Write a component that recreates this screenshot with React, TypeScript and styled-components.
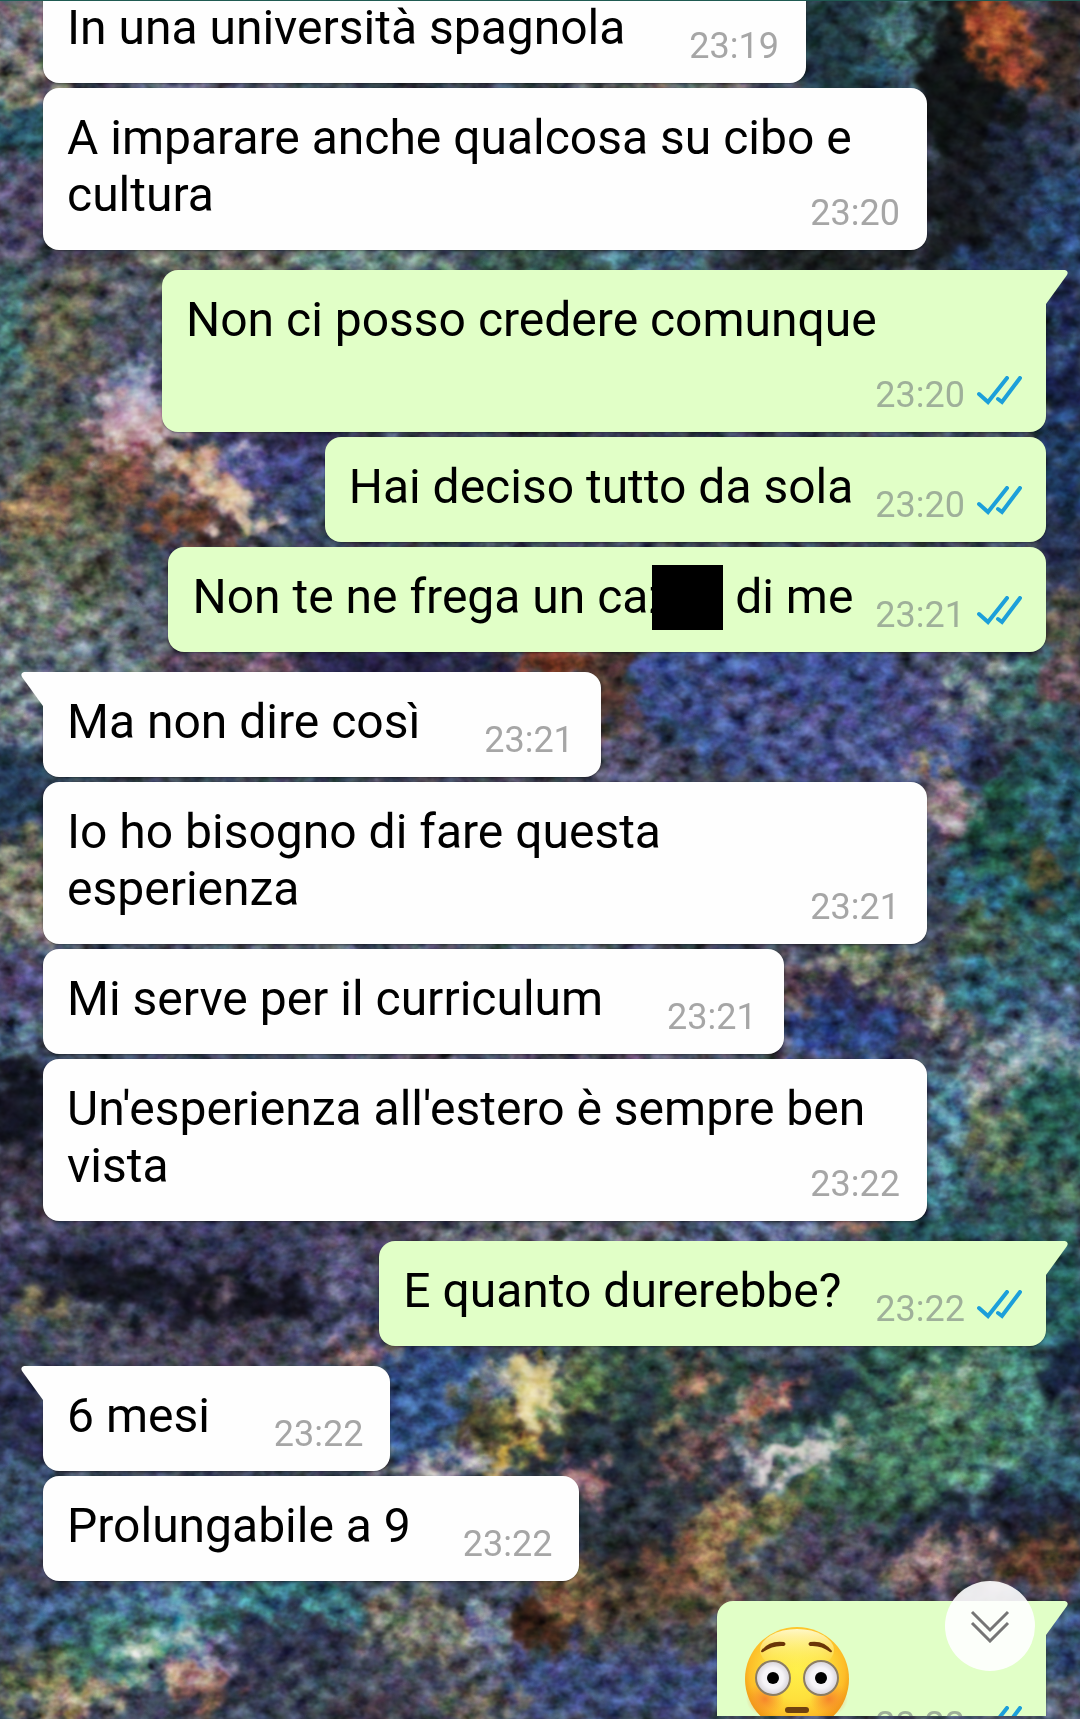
import React from 'react';
import styled, { createGlobalStyle, css } from 'styled-components';

const GlobalStyle = createGlobalStyle`
  *, *::before, *::after { box-sizing: border-box; }
  html, body, #root { height: 100%; margin: 0; }
  body { font-family: Roboto, "Noto Sans", sans-serif; background: #3b4358; }
`;

const Screen = styled.div`
  position: relative;
  display: flex;
  flex-direction: column;
  height: 100vh;
  padding-bottom: 3px;
  border-top: 1px solid #1f5a52;
  overflow: hidden;
`;

const WallpaperSvg = styled.svg`
  position: absolute;
  inset: 0;
  width: 100%;
  height: 100%;
`;

const Grain = styled.rect`
  opacity: 0.8;
  mix-blend-mode: overlay;
`;

const Conversation = styled.main`
  position: relative;
  flex: 1;
  min-height: 0;
  overflow: hidden;
`;

/* The thread is scrolled part of the way through its first message. */
const Thread = styled.ol`
  display: flex;
  flex-direction: column;
  gap: 5px;
  margin: -23px 0 0;
  padding: 0 34px 0 43px;
  list-style: none;
`;

const Bubble = styled.li<{ $mine: boolean; $first: boolean }>`
  position: relative;
  display: flow-root;
  padding: 21px 24px 16px;
  border-radius: 16px;
  color: #000;
  font-size: 48px;
  line-height: 57px;
  box-shadow: 0 1px 2px rgba(0, 0, 0, 0.35);
  ${({ $mine }) =>
    $mine
      ? css`
          align-self: flex-end;
          margin-left: 119px;
          background: #e1ffc7;
        `
      : css`
          align-self: flex-start;
          margin-right: 119px;
          padding-right: 27px;
          background: #fefefe;
        `}
  ${({ $first, $mine }) =>
    $first &&
    css`
      margin-top: 15px;
      border-top-${$mine ? 'right' : 'left'}-radius: 0;
    `}
`;

const TailSvg = styled.svg<{ $mine: boolean }>`
  position: absolute;
  top: 0;
  width: 23px;
  height: 35px;
  ${({ $mine }) => ($mine ? 'right: -22px;' : 'left: -22px; transform: scaleX(-1);')}
`;

const Meta = styled.span<{ $mine: boolean; $tall: boolean }>`
  float: right;
  display: flex;
  align-items: flex-start;
  gap: 12px;
  margin-top: ${({ $tall }) => ($tall ? 82 : 26)}px;
  margin-left: ${({ $mine }) => ($mine ? 22 : 52)}px;
  color: ${({ $mine }) => ($mine ? '#9fb09a' : '#a6a6a6')};
  font-size: 36px;
  line-height: 42px;
`;

const TicksSvg = styled.svg`
  width: 45px;
  height: 30px;
  margin-top: 2px;
`;

const Redaction = styled.span`
  position: relative;
  display: inline-block;
  width: 71px;
  height: 65px;
  margin: -3px 0 -5px -20px;
  vertical-align: top;
  background: #000;
`;

const EmojiSvg = styled.svg`
  float: left;
  width: 112px;
  height: 112px;
`;

const ScrollButton = styled.button`
  position: absolute;
  right: 45px;
  bottom: 48px;
  display: grid;
  place-items: center;
  width: 90px;
  height: 90px;
  padding: 0;
  border: 0;
  border-radius: 50%;
  background: rgba(255, 255, 255, 0.9);
`;

const ChevronSvg = styled.svg`
  width: 40px;
  height: 34px;
`;

type Stroke = [number, number, number, number, number, string];

/* Brush strokes of the painted wallpaper: x, y, rx, ry, angle, colour. */
const strokes: Stroke[] = [
  [10, 20, 60, 60, 0, '#77757d'], [20, 75, 50, 30, 0, '#7b7a70'], [10, 120, 45, 28, 0, '#2c5867'],
  [20, 190, 50, 50, 20, '#55506a'], [60, 245, 60, 30, 0, '#4a4a5c'],
  [180, 78, 90, 14, 0, '#575a72'], [400, 78, 150, 14, 0, '#3c4a58'], [600, 78, 100, 12, 0, '#6a6b62'],
  [770, 40, 55, 60, 0, '#213943'], [825, 25, 28, 55, 10, '#477072'], [805, 80, 16, 30, 0, '#275063'],
  [885, 80, 50, 110, 0, '#111517'], [912, 28, 26, 50, -25, '#a9512d'], [935, 55, 16, 26, -20, '#8a452e'],
  [970, 40, 24, 70, 0, '#352c2b'], [875, 200, 35, 70, 0, '#171a20'], [930, 170, 30, 70, 0, '#202a3d'],
  [970, 200, 30, 60, 0, '#29466f'], [960, 130, 20, 30, 0, '#2c3650'],
  [220, 238, 120, 22, 0, '#6c6f66'], [350, 238, 80, 20, 0, '#6b8884'], [500, 238, 90, 16, 0, '#38574f'],
  [600, 238, 50, 14, 0, '#47728b'], [750, 238, 100, 16, 0, '#1b2020'], [910, 245, 50, 20, 0, '#263d63'],
  [15, 310, 35, 70, 0, '#456f72'], [70, 300, 50, 55, 20, '#666455'], [120, 300, 35, 60, 10, '#515869'],
  [30, 400, 45, 55, 0, '#55605f'], [80, 440, 50, 50, 0, '#5c5846'], [30, 470, 35, 35, 0, '#886f53'],
  [120, 385, 38, 34, 30, '#c7abb3'], [125, 350, 22, 20, 30, '#a3a3c0'], [115, 430, 28, 26, 20, '#87584a'],
  [255, 415, 65, 42, 20, '#43437b'], [235, 400, 18, 34, 40, '#8c8abb'], [275, 455, 30, 30, 0, '#3f517a'],
  [185, 435, 44, 17, 40, '#d3aa8d'], [220, 465, 40, 13, 40, '#ecd2b8'], [165, 475, 36, 20, 25, '#7c4930'],
  [200, 488, 34, 10, 15, '#4b3029'], [60, 530, 70, 50, 0, '#687162'], [30, 570, 60, 40, 0, '#777f7b'],
  [90, 522, 11, 11, 0, '#16120b'], [130, 560, 35, 40, 0, '#5c6470'], [250, 395, 80, 10, 0, '#2b2946'],
  [550, 396, 200, 10, 0, '#33384e'],
  [970, 330, 28, 80, 0, '#1c2750'], [972, 430, 22, 60, 0, '#1e3a62'], [970, 500, 24, 40, 0, '#26304f'],
  [972, 575, 24, 38, 0, '#59534a'], [972, 310, 12, 20, 0, '#3c5a82'],
  [60, 605, 90, 26, 0, '#66737c'], [220, 605, 90, 18, 0, '#6b5567'], [370, 605, 110, 18, 0, '#242144'],
  [510, 604, 50, 16, 0, '#7c3c28'], [580, 640, 55, 55, 0, '#4f3931'], [575, 690, 50, 30, 0, '#55526f'],
  [720, 640, 150, 70, 10, '#3e508c'], [780, 680, 100, 34, 10, '#4a568d'], [700, 640, 70, 10, 12, '#504a72'],
  [620, 670, 18, 14, 0, '#263e56'], [845, 640, 40, 40, 0, '#4b4d80'], [890, 630, 38, 30, 0, '#74808d'],
  [940, 630, 32, 38, 0, '#3d6868'], [975, 620, 20, 30, 0, '#665259'], [880, 690, 30, 24, 0, '#405a9a'],
  [12, 720, 36, 60, 0, '#253c57'], [15, 650, 30, 35, 0, '#737f87'], [15, 790, 34, 34, 0, '#6e7061'],
  [20, 835, 28, 34, 0, '#8e8b7b'], [15, 895, 34, 34, 0, '#4d4872'], [15, 950, 34, 30, 0, '#526b85'],
  [15, 1010, 34, 45, 0, '#151724'], [15, 1080, 40, 34, 0, '#393446'],
  [250, 711, 220, 8, 0, '#374954'], [450, 711, 120, 8, 0, '#4b4650'], [300, 864, 300, 9, 0, '#586576'],
  [965, 780, 60, 110, 0, '#22545d'], [915, 760, 40, 60, 0, '#215047'], [900, 690, 26, 10, -45, '#221a32'],
  [865, 738, 27, 22, 30, '#9c8890'], [848, 700, 17, 10, 0, '#a98764'], [960, 740, 28, 28, 0, '#34637c'],
  [890, 810, 34, 20, 0, '#2f6d87'], [955, 795, 26, 20, 20, '#504b31'], [900, 850, 34, 22, 0, '#4b624e'],
  [965, 860, 34, 26, 0, '#376a71'], [780, 890, 70, 28, 0, '#6d7368'], [730, 895, 26, 26, 0, '#67555d'],
  [800, 918, 65, 28, 20, '#2b2549'], [765, 942, 56, 24, 0, '#304987'], [850, 925, 34, 16, 25, '#8a8580'],
  [780, 880, 32, 14, 20, '#8a9a78'], [900, 900, 40, 28, 0, '#346a7c'], [960, 930, 30, 30, 0, '#526f92'],
  [945, 965, 56, 24, 0, '#85a2aa'], [895, 985, 24, 24, 0, '#7d7f85'], [960, 1050, 60, 80, 0, '#285953'],
  [905, 1040, 24, 34, 0, '#65765d'], [865, 1020, 14, 58, 10, '#5995aa'], [858, 1090, 20, 34, 25, '#467f8c'],
  [965, 1090, 30, 28, 0, '#47675e'], [540, 962, 230, 7, 0, '#70637b'],
  [100, 1122, 150, 18, 0, '#565574'], [320, 1126, 130, 18, 0, '#49445a'], [510, 1125, 120, 18, 0, '#6c6c76'],
  [710, 1123, 100, 14, 0, '#606b94'], [790, 1120, 32, 12, 0, '#a5675c'], [870, 1125, 80, 20, 0, '#254f56'],
  [170, 1180, 230, 70, 0, '#3b3c5b'], [100, 1170, 60, 28, 10, '#171926'], [220, 1190, 72, 30, 10, '#14141f'],
  [65, 1210, 60, 14, 0, '#525d67'], [40, 1190, 30, 14, 0, '#66604c'], [310, 1155, 30, 30, 0, '#5c597c'],
  [203, 1178, 8, 8, 0, '#8a7585'], [200, 1230, 150, 24, 0, '#4a465b'], [310, 1220, 40, 20, 0, '#4d5172'],
  [15, 1300, 40, 55, 0, '#2c3152'], [15, 1380, 40, 60, 0, '#3f5672'], [20, 1450, 40, 34, 0, '#3e3d4f'],
  [970, 1190, 30, 60, 0, '#2a6063'], [350, 1241, 60, 16, 0, '#7b6261'],
  [400, 1285, 60, 70, 0, '#345387'], [450, 1300, 34, 54, 0, '#6a7a8e'], [405, 1340, 60, 16, 0, '#9a969f'],
  [600, 1275, 110, 60, 0, '#2f4b49'], [480, 1305, 65, 22, 0, '#443c24'], [485, 1268, 28, 34, 0, '#d7c994'],
  [490, 1282, 15, 17, 0, '#efe5b1'], [470, 1328, 23, 20, 0, '#d6b95a'], [535, 1260, 24, 35, 0, '#5c754e'],
  [440, 1285, 24, 15, 0, '#54583f'], [560, 1350, 100, 65, -20, '#26323d'],
  [530, 1350, 26, 14, 30, '#a47581'], [630, 1255, 28, 16, 0, '#886754'], [610, 1300, 26, 10, -25, '#81704e'],
  [640, 1325, 46, 14, -30, '#755856'], [820, 1290, 130, 70, -20, '#345f55'], [740, 1270, 50, 25, -20, '#222f42'],
  [703, 1275, 34, 11, -25, '#ca8872'], [665, 1300, 12, 12, 0, '#a7a092'],
  [870, 1265, 55, 22, -20, '#719375'], [930, 1290, 40, 65, 0, '#498177'], [970, 1250, 18, 42, 30, '#17243e'],
  [850, 1335, 80, 45, -10, '#487760'], [910, 1350, 50, 18, -35, '#629693'], [960, 1350, 45, 38, 0, '#31596a'],
  [725, 1328, 45, 11, -20, '#f1e5e5'], [703, 1335, 25, 11, 0, '#f5e9e9'], [765, 1317, 24, 9, -20, '#c6c2bb'],
  [870, 1400, 110, 34, -15, '#20283f'], [600, 1410, 70, 50, -20, '#313a45'], [650, 1410, 26, 54, 25, '#967853'],
  [710, 1380, 42, 14, -40, '#7a7a4a'], [760, 1415, 50, 28, 0, '#4e4b5e'], [790, 1370, 55, 20, 0, '#355848'],
  [955, 1405, 50, 20, -15, '#23242d'], [950, 1425, 50, 19, -15, '#61422f'], [855, 1425, 56, 24, -25, '#8a7271'],
  [560, 1445, 60, 38, -20, '#252328'], [610, 1440, 24, 34, 20, '#76503c'], [700, 1450, 52, 19, 0, '#4e514b'],
  [640, 1460, 38, 14, -15, '#9a7c61'], [520, 1450, 38, 28, 0, '#7c6545'], [590, 1470, 68, 28, 0, '#554635'],
  [480, 1475, 24, 17, -20, '#26160f'], [515, 1470, 19, 25, 20, '#9a7252'], [485, 1492, 40, 14, -20, '#412719'],
  [600, 1495, 82, 18, 0, '#4c4d50'], [560, 1540, 140, 34, 0, '#3d4c79'], [900, 1455, 80, 13, 0, '#474155'],
  [970, 1500, 28, 44, 0, '#354f76'], [970, 1550, 26, 20, 0, '#5b6070'],
  [50, 1470, 70, 28, 0, '#3d577b'], [180, 1465, 90, 22, 0, '#5380a3'], [270, 1465, 60, 26, 0, '#397784'],
  [100, 1500, 60, 28, -20, '#3e706d'], [125, 1506, 36, 9, -30, '#b7ccae'], [170, 1490, 22, 15, 0, '#82c0c2'],
  [195, 1475, 16, 14, 0, '#284338'], [195, 1515, 19, 13, 0, '#8986b0'], [165, 1527, 16, 20, 25, '#cea99d'],
  [190, 1540, 38, 15, -20, '#78534d'], [110, 1530, 32, 14, 0, '#4e838b'], [40, 1535, 50, 19, 0, '#6d7755'],
  [70, 1550, 50, 12, -10, '#b09d7c'], [270, 1520, 62, 50, 0, '#343951'], [310, 1540, 55, 19, 0, '#465360'],
  [385, 1485, 60, 30, 15, '#78796c'], [390, 1535, 74, 24, 0, '#4a4d5f'], [450, 1490, 19, 38, 0, '#77819c'],
  [440, 1555, 46, 12, 0, '#6c675c'], [330, 1562, 38, 12, 0, '#3e313d'],
];

function Wallpaper() {
  return (
    <WallpaperSvg viewBox="0 0 985 1568" preserveAspectRatio="none" aria-hidden="true">
      <defs>
        <filter id="paint" x="-40" y="-40" width="1065" height="1648" filterUnits="userSpaceOnUse" colorInterpolationFilters="sRGB">
          <feGaussianBlur in="SourceGraphic" stdDeviation="7" result="soft" />
          <feTurbulence type="fractalNoise" baseFrequency="0.05" numOctaves="4" seed="7" result="warp" />
          <feDisplacementMap in="soft" in2="warp" scale="60" xChannelSelector="R" yChannelSelector="G" />
          <feGaussianBlur stdDeviation="1.5" />
        </filter>
        <filter id="grain" x="0" y="0" width="100%" height="100%" filterUnits="userSpaceOnUse" colorInterpolationFilters="sRGB">
          <feTurbulence type="fractalNoise" baseFrequency="0.06 0.07" numOctaves="3" seed="12" />
          <feColorMatrix
            values="0.9 0.5 0.3 0 -0.38
                    0.6 0.8 0.3 0 -0.38
                    0.6 0.5 0.6 0 -0.38
                    0 0 0 0 1"
          />
          <feGaussianBlur stdDeviation="0.7" />
        </filter>
      </defs>
      <g filter="url(#paint)">
        <rect x="-50" y="-50" width="1085" height="1668" fill="#3f485c" />
        {strokes.map(([x, y, rx, ry, angle, fill], i) => (
          <ellipse key={i} cx={x} cy={y} rx={rx} ry={ry} fill={fill} transform={`rotate(${angle} ${x} ${y})`} />
        ))}
      </g>
      <Grain width="985" height="1568" filter="url(#grain)" />
    </WallpaperSvg>
  );
}

function Tail({ mine }: { mine: boolean }) {
  return (
    <TailSvg $mine={mine} viewBox="0 0 23 35" aria-hidden="true">
      <path d="M0 0H20Q24 1 22 5L1 34H0Z" fill={mine ? '#e1ffc7' : '#fefefe'} />
    </TailSvg>
  );
}

function Ticks() {
  return (
    <TicksSvg viewBox="0 0 45 30" role="img" aria-label="Letto">
      <g fill="none" stroke="#1c9fda" strokeWidth="4" strokeLinecap="round" strokeLinejoin="miter">
        <path d="M2 18L11 26L30 2" />
        <path d="M21 23L25 26L43 2" />
      </g>
    </TicksSvg>
  );
}

function FlushedFace() {
  return (
    <EmojiSvg viewBox="0 0 112 112" role="img" aria-label="😳">
      <defs>
        <radialGradient id="face" cx="50%" cy="42%" r="56%">
          <stop offset="0" stopColor="#fff04a" />
          <stop offset="0.5" stopColor="#fee03c" />
          <stop offset="0.82" stopColor="#fdbd28" />
          <stop offset="1" stopColor="#ee9510" />
        </radialGradient>
        <linearGradient id="shine" x1="0" y1="0" x2="0" y2="1">
          <stop offset="0" stopColor="#fffbd0" stopOpacity="0.95" />
          <stop offset="1" stopColor="#fff36a" stopOpacity="0" />
        </linearGradient>
        <radialGradient id="blush">
          <stop offset="0" stopColor="#f47a2c" stopOpacity="0.85" />
          <stop offset="1" stopColor="#f98b2c" stopOpacity="0" />
        </radialGradient>
        <radialGradient id="eye">
          <stop offset="0.6" stopColor="#f6f4f8" />
          <stop offset="1" stopColor="#d5d1d8" />
        </radialGradient>
      </defs>
      <circle cx="56" cy="57" r="52" fill="url(#face)" />
      <ellipse cx="56" cy="28" rx="37" ry="21" fill="url(#shine)" />
      <ellipse cx="24" cy="77" rx="19" ry="17" fill="url(#blush)" />
      <ellipse cx="88" cy="77" rx="19" ry="17" fill="url(#blush)" />
      <g fill="#6b3507">
        <path d="M20 29Q28 18 43 20Q46 22 43 24Q32 23 22 30Q20 31 20 29Z" />
        <path d="M91 29Q83 18 69 20Q66 22 69 24Q80 23 89 30Q91 31 91 29Z" />
      </g>
      <g fill="url(#eye)" stroke="#8c7d62" strokeWidth="2">
        <circle cx="32" cy="56" r="17" />
        <circle cx="80" cy="56" r="17" />
      </g>
      <circle cx="32" cy="56" r="6" />
      <circle cx="80" cy="56" r="6" />
      <rect x="44" y="85" width="24" height="6" rx="3" fill="#70420f" />
    </EmojiSvg>
  );
}

interface Message {
  time: string;
  body: React.ReactNode;
  mine?: boolean;
  first?: boolean;
  tall?: boolean;
}

const messages: Message[] = [
  { time: '23:19', body: 'In una università spagnola\u00a0' },
  { time: '23:20', body: 'A imparare anche qualcosa su cibo e cultura' },
  { time: '23:20', body: 'Non ci posso credere comunque', mine: true, first: true },
  { time: '23:20', body: 'Hai deciso tutto da sola', mine: true },
  {
    time: '23:21',
    body: (
      <>
        Non te ne frega un caz
        <Redaction /> di me
      </>
    ),
    mine: true,
  },
  { time: '23:21', body: 'Ma non dire così\u00a0', first: true },
  { time: '23:21', body: 'Io ho bisogno di fare questa esperienza' },
  { time: '23:21', body: 'Mi serve per il curriculum\u00a0' },
  { time: '23:22', body: "Un'esperienza all'estero è sempre ben vista" },
  { time: '23:22', body: 'E quanto durerebbe?\u00a0', mine: true, first: true },
  { time: '23:22', body: '6 mesi\u00a0', first: true },
  { time: '23:22', body: 'Prolungabile a 9' },
  { time: '23:22', body: <FlushedFace />, mine: true, first: true, tall: true },
];

export default function App() {
  return (
    <>
      <GlobalStyle />
      <Screen>
        <Wallpaper />
        <Conversation>
          <Thread>
            {messages.map(({ time, body, mine = false, first = false, tall = false }, i) => (
              <Bubble key={i} $mine={mine} $first={first}>
                {first && <Tail mine={mine} />}
                {body}
                <Meta $mine={mine} $tall={tall}>
                  <time>{time}</time>
                  {mine && <Ticks />}
                </Meta>
              </Bubble>
            ))}
          </Thread>
        </Conversation>
        <ScrollButton type="button" aria-label="Vai in fondo">
          <ChevronSvg viewBox="0 0 40 34" aria-hidden="true">
            <path d="M2 3L20 21L38 3M2 14L20 32L38 14" fill="none" stroke="#757575" strokeWidth="3" />
          </ChevronSvg>
        </ScrollButton>
      </Screen>
    </>
  );
}
